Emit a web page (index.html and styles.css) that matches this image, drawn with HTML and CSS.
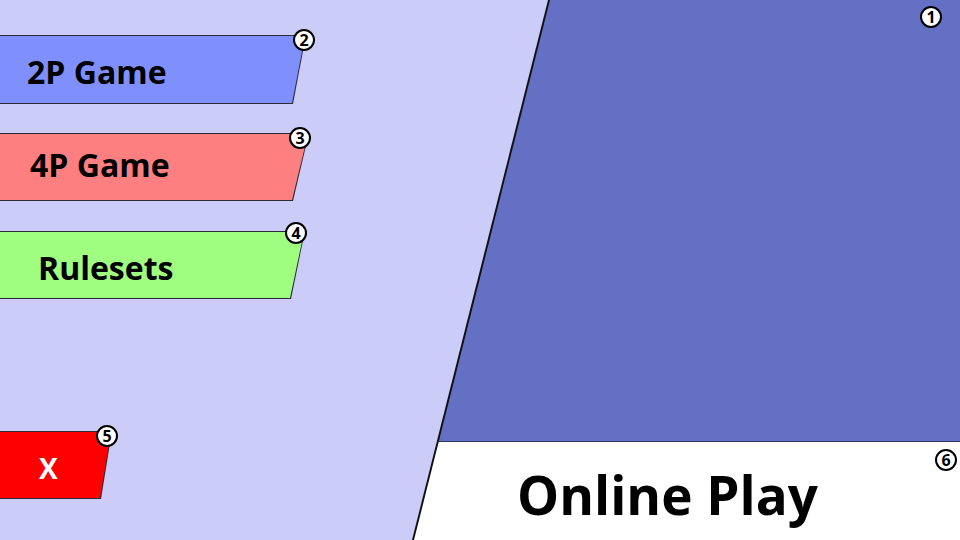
FILE: index.html
```html
<!DOCTYPE html>
<html lang="en">
<head>
<meta charset="utf-8">
<title>Menu</title>
<link rel="stylesheet" href="styles.css">
</head>
<body>
<div class="screen">
  <nav class="menu">
    <div class="btn btn-2p">
      <div class="btn-shape"><div class="btn-face"><span class="btn-label">2P Game</span></div></div>
      <span class="badge">2</span>
    </div>
    <div class="btn btn-4p">
      <div class="btn-shape"><div class="btn-face"><span class="btn-label">4P Game</span></div></div>
      <span class="badge">3</span>
    </div>
    <div class="btn btn-rules">
      <div class="btn-shape"><div class="btn-face"><span class="btn-label">Rulesets</span></div></div>
      <span class="badge">4</span>
    </div>
    <div class="btn btn-exit">
      <div class="btn-shape"><div class="btn-face"><span class="btn-label">X</span></div></div>
      <span class="badge">5</span>
    </div>
  </nav>
  <section class="online">
    <div class="online-inner">
      <div class="online-top"><span class="badge badge-1">1</span></div>
      <div class="online-bottom">
        <span class="online-label">Online Play</span>
        <span class="badge badge-6">6</span>
      </div>
    </div>
  </section>
</div>
</body>
</html>
```

FILE: styles.css
```css
html, body {
  margin: 0;
  padding: 0;
}
body {
  width: 960px;
  height: 540px;
  overflow: hidden;
  background: #cbccf8;
  font-family: "Open Sans", "Noto Sans", sans-serif;
}
.screen {
  display: grid;
  width: 960px;
  height: 540px;
}
.menu, .online {
  grid-area: 1 / 1;
}

/* left menu */
.menu {
  display: flex;
  flex-direction: column;
  align-items: flex-start;
  padding-top: 35px;
}
.btn {
  position: relative;
  height: 69px;
  width: var(--w);
}
.btn-2p { --w: 306px; --s: 13px; }
.btn-4p { --w: 309px; --s: 16px; margin-top: 29px; height: 68px; }
.btn-rules { --w: 305px; --s: 14px; margin-top: 30px; height: 68px; }
.btn-exit { --w: 112px; --s: 11px; margin-top: 132px; height: 68px; }

.btn-shape {
  height: 100%;
  box-sizing: border-box;
  padding: 1px 0;
  background: #2b2b38;
  clip-path: polygon(0 0, 100% 0, calc(100% - var(--s)) 100%, 0 100%);
}
.btn-face {
  height: 100%;
  display: flex;
  align-items: center;
  clip-path: polygon(0 0, calc(100% - 1px) 0, calc(100% - var(--s) - 1px) 100%, 0 100%);
}
.btn-label {
  font-weight: 700;
  font-size: 32px;
  line-height: 1;
  color: #000;
  padding-top: 5px;
}
.btn-2p .btn-face { background: #7f8ffe; }
.btn-2p .btn-label { padding-left: 27px; }
.btn-4p .btn-face { background: #fe7f7f; }
.btn-4p .btn-label { padding-left: 30px; padding-top: 0; padding-bottom: 5px; }
.btn-rules .btn-face { background: #9ffe7f; }
.btn-rules .btn-label { padding-left: 38px; }
.btn-exit .btn-face { background: #fe0000; }
.btn-exit .btn-label { padding-left: 39px; color: #fff; font-size: 28px; }

/* badges */
.badge {
  position: absolute;
  width: 22px;
  height: 22px;
  box-sizing: border-box;
  border: 2px solid #000;
  border-radius: 50%;
  background: #fff;
  color: #000;
  font-family: "Open Sans", sans-serif;
  font-weight: 700;
  font-size: 16px;
  line-height: 18px;
  text-align: center;
}
.btn-2p .badge { top: -6px; left: 293px; }
.btn-4p .badge { top: -6px; left: 289px; }
.btn-rules .badge { top: -9px; left: 285px; }
.btn-exit .badge { top: -6px; left: 96px; }

/* online panel */
.online {
  justify-self: end;
  width: 548px;
  height: 540px;
  background: #111;
  clip-path: polygon(136px 0, 100% 0, 100% 100%, 0 100%);
}
.online-inner {
  height: 100%;
  display: flex;
  flex-direction: column;
  clip-path: polygon(138px 0, 100% 0, 100% 100%, 2px 100%);
}
.online-top {
  position: relative;
  height: 441px;
  flex: none;
  background: #6370c4;
  border-bottom: 1px solid #333a66;
}
.online-bottom {
  position: relative;
  flex: 1;
  background: #fff;
  padding: 26px 0 0 105px;
}
.online-label {
  display: block;
  font-weight: 700;
  font-size: 53px;
  line-height: 1;
  color: #000;
}
.badge-1 { top: 6px; right: 18px; }
.badge-6 { top: 7px; right: 3px; }
```
